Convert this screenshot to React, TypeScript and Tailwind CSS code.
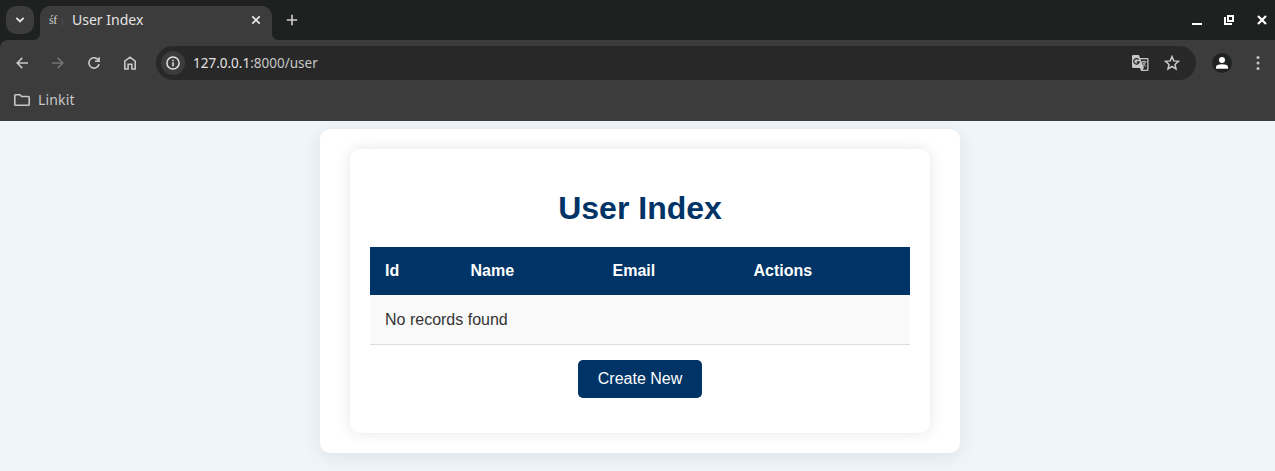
import React from "react";

const stroke = {
  fill: "none",
  stroke: "currentColor",
  strokeWidth: 1.6,
} as const;

function TabStrip() {
  return (
    <div className="flex h-10 items-start bg-[#1f2121] text-[#e3e3e3]">
      <button className="mt-1.5 ml-1.5 flex size-7 items-center justify-center rounded-[10px] bg-[#3c3c3c]">
        <svg width="10" height="8" viewBox="0 0 10 8" {...stroke} strokeWidth="1.9">
          <path d="M1.3 1.8 5 5.5 8.7 1.8" />
        </svg>
      </button>
      <svg className="mt-[34px] h-1.5 w-1.5 text-[#3c3c3c]" viewBox="0 0 6 6">
        <path d="M6 0V6H0A6 6 0 0 0 6 0Z" fill="currentColor" />
      </svg>
      <div className="mt-1.5 flex h-[34px] w-[232px] items-center rounded-t-[10px] bg-[#3c3c3c] pb-[6px] pl-2 pr-[11px]">
        <span className="w-[12px] pl-[1px] font-['Liberation_Serif',serif] text-[12px] leading-4 tracking-[-0.4px] text-[#d0d0d0]">
          śf
        </span>
        <svg className="mt-[3px] text-[#575757]" width="4" height="10" viewBox="0 0 4 12" {...stroke} strokeWidth="1">
          <path d="M0 1Q3 3 3 6T0 11" />
        </svg>
        <span className="ml-2 flex-1 whitespace-nowrap font-['Noto_Sans',sans-serif] text-[14px] leading-5">
          User Index
        </span>
        <svg width="10" height="10" viewBox="0 0 10 10" {...stroke} strokeWidth="1.9">
          <path d="M1.3 1.3 8.7 8.7M8.7 1.3 1.3 8.7" />
        </svg>
      </div>
      <svg className="mt-[34px] h-1.5 w-1.5 text-[#3c3c3c]" viewBox="0 0 6 6">
        <path d="M0 0V6H6A6 6 0 0 1 0 0Z" fill="currentColor" />
      </svg>
      <svg className="ml-2 mt-[14px] text-[#d0d0d0]" width="12" height="12" viewBox="0 0 12 12" {...stroke}>
        <path d="M6 .8V11.2M.8 6H11.2" />
      </svg>
      <div className="ml-auto mr-2 mt-[14px] flex items-center text-white">
        <svg width="10" height="12" viewBox="0 0 10 12">
          <path d="M0 9H10V11H0Z" fill="currentColor" />
        </svg>
        <svg className="ml-[22px]" width="10" height="12" viewBox="0 0 10 12" {...stroke} strokeWidth="2">
          <path d="M4 2H9V7H4ZM1 3V10H8" />
        </svg>
        <svg className="ml-[23px]" width="10" height="12" viewBox="0 0 10 12" {...stroke} strokeWidth="2.2">
          <path d="M1 2 9 10M9 2 1 10" />
        </svg>
      </div>
    </div>
  );
}

function AddressBar() {
  return (
    <div className="flex h-[34px] w-[1040px] items-center rounded-full bg-[#282828] pl-[5px] pr-4">
      <span className="flex size-6 items-center justify-center rounded-full bg-[#3c3c3c] text-[#e3e3e3]">
        <svg width="14" height="14" viewBox="0 0 14 14" {...stroke} strokeWidth="1.5">
          <circle cx="7" cy="7" r="6.1" />
          <path d="M7 6.2V10.2M7 3.8V5.2" />
        </svg>
      </span>
      <span className="ml-2 flex-1 whitespace-nowrap font-['Noto_Sans',sans-serif] text-[13.5px] leading-5 text-[#c7c7c7]">
        <span className="text-[#e3e3e3]">127.0.0.1</span>:8000/user
      </span>
      <svg className="text-[#c7c7c7]" width="17" height="16" viewBox="0 0 17 16" fill="none">
        <path d="M1.2 0H7L8 3H15.5Q16.5 3 16.5 4.2V14.8Q16.5 16 15.5 16H9L8 13H1.2Q0 13 0 11.8V1.2Q0 0 1.2 0Z" fill="currentColor" />
        <path d="M8.5 4.3H15.2V14.7H10.3L12 13Z" fill="#282828" />
        <path d="M6.6 4.7A2.7 2.7 0 1 0 7.1 7H4.8" stroke="#282828" strokeWidth="1.3" />
        <path d="M9.5 6.8H14.5M12 5.6V6.8M13.5 6.8Q12.7 9.5 10.8 11M10.6 7.5Q11.8 9.8 14 11.5" stroke="currentColor" strokeWidth="1" />
      </svg>
      <svg className="ml-[15px] text-[#c7c7c7]" width="16" height="16" viewBox="0 0 16 16" {...stroke} strokeWidth="1.5">
        <path d="M8 1.6 9.8 5.9 14.5 6.3 11 9.4 12 14 8 11.5 4 14 5 9.4 1.5 6.3 6.2 5.9Z" />
      </svg>
    </div>
  );
}

function Toolbar() {
  return (
    <div className="bg-[#1f2121]">
      <div className="h-[81px] rounded-tl-lg bg-[#3c3c3c] pt-1.5">
        <div className="flex h-[34px] items-center text-[#c7c7c7]">
          <svg className="ml-4" width="12" height="12" viewBox="0 0 12 12" {...stroke}>
            <path d="M12 6H1.3M6.3.9 1.2 6 6.3 11.1" />
          </svg>
          <svg className="ml-6 text-[#747474]" width="12" height="12" viewBox="0 0 12 12" {...stroke}>
            <path d="M0 6H10.7M5.7.9 10.8 6 5.7 11.1" />
          </svg>
          <svg className="ml-6" width="12" height="12" viewBox="0 0 12 12" {...stroke}>
            <path d="M10.6 3.5A5.15 5.15 0 1 0 11.1 7M11.1.2V4.2H7" />
          </svg>
          <svg className="ml-6" width="12" height="14" viewBox="0 0 12 14" {...stroke}>
            <path d="M.8 5.1 6 1.2 11.2 5.1V13H7.9V8.2H4.1V13H.8Z" />
          </svg>
          <div className="ml-5">
            <AddressBar />
          </div>
          <svg className="ml-4" width="20" height="20" viewBox="0 0 20 20">
            <circle cx="10" cy="10" r="10" fill="#202222" />
            <circle cx="10" cy="7" r="3" fill="white" />
            <path d="M4 15.8V14Q4 11.2 10 11.2T16 14V15.8Z" fill="white" />
          </svg>
          <svg className="ml-6" width="4" height="16" viewBox="0 0 4 16" fill="currentColor">
            <circle cx="2" cy="2.6" r="1.5" />
            <circle cx="2" cy="8" r="1.5" />
            <circle cx="2" cy="13.4" r="1.5" />
          </svg>
        </div>
        <div className="flex h-10 items-center pl-3.5 text-[#c7c7c7]">
          <svg width="16" height="12" viewBox="0 0 16 12" {...stroke} strokeWidth="1.6">
            <path d="M.8 1.5Q.8.8 1.5.8H6L7.6 2.5H14.4Q15.2 2.5 15.2 3.2V10.5Q15.2 11.2 14.4 11.2H1.6Q.8 11.2.8 10.5Z" />
          </svg>
          <span className="ml-2 font-['Noto_Sans',sans-serif] text-[14px] leading-5 tracking-[0.15px]">Linkit</span>
        </div>
      </div>
    </div>
  );
}

function UserTable() {
  return (
    <table className="w-full table-fixed border-separate border-spacing-0 text-left text-base leading-[18px]">
      <colgroup>
        <col className="w-[85.5px]" />
        <col className="w-[142px]" />
        <col className="w-[141px]" />
        <col className="w-[171.5px]" />
      </colgroup>
      <thead>
        <tr className="h-12 bg-[#003366] text-white">
          <th className="px-[15px]">Id</th>
          <th className="px-[15px]">Name</th>
          <th className="px-[15px]">Email</th>
          <th className="px-[15px]">Actions</th>
        </tr>
      </thead>
      <tbody>
        <tr className="h-[50px] bg-[#f9f9f9]">
          <td colSpan={4} className="border-b border-[#dddddd] px-[15px]">No records found</td>
        </tr>
      </tbody>
    </table>
  );
}

export default function App() {
  return (
    <div className="flex h-[471px] w-[1275px] flex-col overflow-hidden">
      <TabStrip />
      <Toolbar />
      <main className="flex-1 overflow-hidden bg-[#f0f5f9] pl-[320px] pt-2 font-['Liberation_Sans',sans-serif] text-[#333333]">
        <div className="h-[324px] w-[640px] rounded-[10px] bg-white px-[30px] py-5 shadow-[0_4px_20px_rgba(0,0,0,0.08)]">
          <div className="flex h-[284px] flex-col items-center rounded-[10px] bg-white px-5 pt-[41px] shadow-[0_0_15px_rgba(0,0,0,0.1)]">
            <h1 className="mb-5 text-[32px] leading-[37px] font-bold text-[#003366]">User Index</h1>
            <UserTable />
            <button className="mt-[15px] h-[38px] rounded-[5px] bg-[#003366] px-5 text-base leading-[18px] text-white">
              Create New
            </button>
          </div>
        </div>
      </main>
    </div>
  );
}
